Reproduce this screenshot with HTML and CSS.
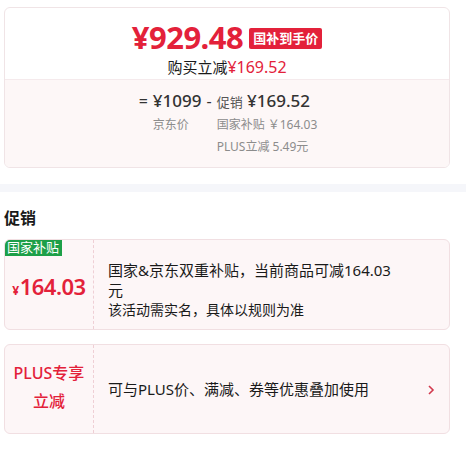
FILE: index.html
```html
<!DOCTYPE html>
<html lang="zh-CN">
<head>
  <meta charset="UTF-8" />
  <meta name="viewport" content="width=device-width, initial-scale=1.0" />
  <title>价格详情</title>
  <link rel="stylesheet" href="styles.css">
</head>
<body>

  <div class="preco-card">
    <div class="preco-topo">
      <div class="preco-linha">
        <span class="preco-grande">¥929.48</span>
        <span class="selo-vermelho">国补到手价</span>
      </div>
      <p class="preco-sub">购买立减<span class="vermelho">¥169.52</span></p>
    </div>
    <div class="preco-baixo">
      <div class="formula">
        <span class="op">=</span>
        <span class="valor">¥1099</span>
        <span class="op">-</span>
        <span class="valor"><small>促销</small> ¥169.52</span>
        <span></span>
        <span class="rotulo">京东价</span>
        <span></span>
        <span class="rotulo">国家补贴 ￥164.03</span>
        <span></span>
        <span></span>
        <span></span>
        <span class="rotulo">PLUS立减 5.49元</span>
      </div>
    </div>
  </div>

  <div class="faixa"></div>

  <h3 class="titulo">促销</h3>

  <div class="promo">
    <div class="promo-esq">
      <span class="selo-verde">国家补贴</span>
      <span class="promo-valor"><small>¥</small>164.03</span>
    </div>
    <div class="promo-dir promo-dir-alto">
      <p class="promo-texto">国家&amp;京东双重补贴，当前商品可减164.03元</p>
      <p class="promo-nota">该活动需实名，具体以规则为准</p>
    </div>
  </div>

  <div class="promo">
    <div class="promo-esq">
      <span class="plus-rotulo">PLUS专享<br>立减</span>
    </div>
    <div class="promo-dir">
      <p class="promo-texto">可与PLUS价、满减、券等优惠叠加使用</p>
    </div>
    <svg class="seta" width="8" height="12" viewBox="0 0 8 12">
      <path d="M2 2 L6 6 L2 10" fill="none" stroke="#d23a4e" stroke-width="1.6" />
    </svg>
  </div>

</body>
</html>
```

FILE: styles.css
```css
* { margin: 0; padding: 0; box-sizing: border-box; }

body {
  font-family: "Noto Sans", "Noto Sans CJK SC", sans-serif;
  background-color: white;
  color: #1a1a1a;
  width: 466px;
}

.vermelho { color: #e3213a; }

.preco-card {
  margin: 7px 0 0 4px;
  width: 446px;
  border: 1px solid #f0e4e6;
  border-radius: 6px;
  overflow: hidden;
}

.preco-topo {
  height: 72px;
  padding-top: 12px;
  border-bottom: 1px solid #f5eaec;
  text-align: center;
}

.preco-linha {
  display: flex;
  justify-content: center;
  align-items: center;
  gap: 6px;
  height: 34px;
}

.preco-grande {
  font-size: 31px;
  font-weight: 700;
  color: #e3213a;
  letter-spacing: -0.5px;
}

.selo-vermelho {
  background-color: #e3213a;
  color: white;
  font-size: 13px;
  font-weight: 700;
  padding: 0 4px;
  height: 21px;
  line-height: 21px;
  border-radius: 2px;
  margin-top: 2px;
}

.preco-sub {
  font-size: 15px;
  line-height: 20px;
  margin-top: 3px;
}

.preco-sub .vermelho { font-size: 16px; }

.preco-baixo {
  background-color: #fdf7f7;
  height: 87px;
  padding-top: 9px;
  display: flex;
  justify-content: center;
}

.formula {
  display: grid;
  grid-template-columns: auto auto auto auto;
  column-gap: 5px;
  align-items: baseline;
  align-content: start;
  margin-left: 2px;
}

.op {
  font-size: 16px;
  color: #333;
}

.valor {
  font-size: 17px;
  font-weight: 500;
  color: #333;
  line-height: 24px;
}

.valor small {
  font-size: 13px;
  font-weight: 400;
  color: #555;
}

.rotulo {
  font-size: 12px;
  color: #8c8c8c;
  line-height: 22px;
}

.faixa {
  height: 8px;
  margin-top: 16px;
  background-color: #f5f6fa;
}

.titulo {
  font-size: 16px;
  font-weight: 700;
  margin: 15px 0 0 4px;
  line-height: 22px;
}

.promo {
  position: relative;
  display: flex;
  margin: 10px 0 0 4px;
  width: 446px;
  height: 91px;
  background-color: #fdf6f7;
  border: 1px solid #f1dfe2;
  border-radius: 6px;
  overflow: hidden;
}

.promo + .promo {
  margin-top: 14px;
  height: 90px;
}

.promo-esq {
  width: 89px;
  border-right: 1px dashed #efcfd5;
  display: flex;
  align-items: center;
  justify-content: center;
  flex-shrink: 0;
}

.selo-verde {
  position: absolute;
  top: -1px;
  left: -1px;
  background-color: #1d9f48;
  color: white;
  font-size: 13px;
  line-height: 17px;
  padding: 0 3px;
  border-top-left-radius: 6px;
}

.promo-valor {
  color: #e3213a;
  font-size: 22px;
  font-weight: 600;
  margin-top: 2px;
  letter-spacing: -0.5px;
}

.promo-valor small {
  font-size: 12px;
  font-weight: 700;
  margin-right: 1px;
}

.plus-rotulo {
  color: #e3213a;
  font-size: 16px;
  font-weight: 500;
  line-height: 28px;
  text-align: center;
  margin-top: -4px;
}

.promo-dir {
  width: 290px;
  margin-left: 14px;
  display: flex;
  flex-direction: column;
  justify-content: center;
}

.promo-dir-alto { padding-top: 10px; }

.promo-texto {
  font-size: 15px;
  line-height: 20px;
}

.promo-nota {
  font-size: 14px;
  line-height: 20px;
}

.seta {
  position: absolute;
  right: 14px;
  top: 39px;
}
```
